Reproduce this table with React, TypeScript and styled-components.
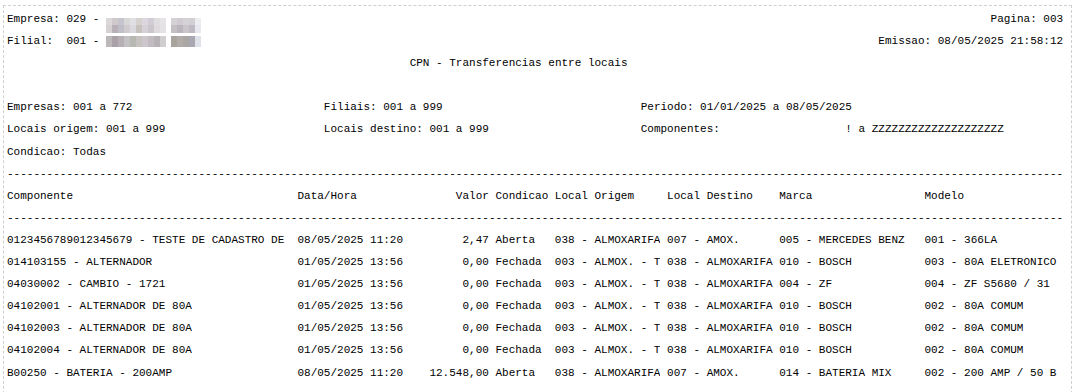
import React from 'react'
import styled, { createGlobalStyle } from 'styled-components'

const GlobalStyle = createGlobalStyle`
  html, body {
    margin: 0;
    padding: 0;
    background: #ffffff;
  }
  body {
    font-family: 'Liberation Mono', 'Courier New', monospace;
    font-size: 11px;
    color: #000000;
  }
`

const Page = styled.div`
  margin: 5px 0 0 3px;
  width: 1061px;
  height: 420px;
  padding: 2px 3px 0 3px;
  border: 1px dashed #cfcfcf;
  line-height: 22.1px;
  white-space: pre;
  overflow: hidden;
`

const Line = styled.div`
  height: 22.1px;
`

const TopLine = styled.div`
  display: flex;
  justify-content: space-between;
  width: 160ch;
  height: 22.1px;
`

const Title = styled.div`
  padding-left: 61ch;
  height: 22.1px;
`

const FilterRow = styled.div`
  display: grid;
  grid-template-columns: 48ch 48ch 64ch;
  height: 22.1px;
`

const Grid = styled.div`
  display: grid;
  grid-template-columns: 43ch 16ch 12ch 8ch 16ch 16ch 21ch 21ch;
  column-gap: 1ch;
  height: 22.1px;
`

const Cell = styled.span<{ $right?: boolean }>`
  overflow: hidden;
  text-align: ${(p) => (p.$right ? 'right' : 'left')};
`

const Mosaic = styled.span<{ $cols: number; $rowH: number }>`
  display: inline-grid;
  grid-template-columns: repeat(${(p) => p.$cols}, 6px);
  grid-auto-rows: ${(p) => p.$rowH}px;
  vertical-align: -3px;
  margin-right: 5px;
`

const Px = styled.span<{ $c: string }>`
  background: ${(p) => p.$c};
`

const empresaA = [
  '#dcd8da', '#cfc9cc', '#c6c4cc', '#d9d6d8', '#e0e0e4', '#d4d1cf', '#dcd6de', '#d2cdd4', '#e0dde0', '#e6e4e6',
  '#d6d2d3', '#b9b1b9', '#c0bec6', '#cfcbce', '#d9d9de', '#c8c2bc', '#d6d0d8', '#cbc6cc', '#dedadd', '#e4e2e4',
]
const empresaB = [
  '#d5d2d6', '#cfcbd0', '#d6d3d8', '#d3d0d4', '#ecedf0',
  '#c4bfc3', '#b9b5bc', '#c9c5ca', '#bdbac4', '#e6e8ee',
]
const filialA = ['#bcb8ba', '#a9a0a8', '#b6b0b4', '#c4c1c2', '#b8b8b2', '#c6c2c0', '#cdc6cc', '#c0bcc0', '#b6b2b6', '#d0cece']
const filialB = ['#a8a39d', '#b2aca8', '#aaa6a4', '#a9a8b2', '#dfe2e8']

const Blur = ({ colors, cols, rowH }: { colors: string[]; cols: number; rowH: number }) => (
  <Mosaic $cols={cols} $rowH={rowH}>
    {colors.map((c, i) => (
      <Px key={i} $c={c} />
    ))}
  </Mosaic>
)

const DASHES = '-'.repeat(160)

type Row = [string, string, string, string, string, string, string, string]

const HEADER: Row = ['Componente', 'Data/Hora', 'Valor', 'Condicao', 'Local Origem', 'Local Destino', 'Marca', 'Modelo']

const ROWS: Row[] = [
  ['0123456789012345679 - TESTE DE CADASTRO DE', '08/05/2025 11:20', '2,47', 'Aberta', '038 - ALMOXARIFA', '007 - AMOX.', '005 - MERCEDES BENZ', '001 - 366LA'],
  ['014103155 - ALTERNADOR', '01/05/2025 13:56', '0,00', 'Fechada', '003 - ALMOX. - T', '038 - ALMOXARIFA', '010 - BOSCH', '003 - 80A ELETRONICO'],
  ['04030002 - CAMBIO - 1721', '01/05/2025 13:56', '0,00', 'Fechada', '003 - ALMOX. - T', '038 - ALMOXARIFA', '004 - ZF', '004 - ZF S5680 / 31'],
  ['04102001 - ALTERNADOR DE 80A', '01/05/2025 13:56', '0,00', 'Fechada', '003 - ALMOX. - T', '038 - ALMOXARIFA', '010 - BOSCH', '002 - 80A COMUM'],
  ['04102003 - ALTERNADOR DE 80A', '01/05/2025 13:56', '0,00', 'Fechada', '003 - ALMOX. - T', '038 - ALMOXARIFA', '010 - BOSCH', '002 - 80A COMUM'],
  ['04102004 - ALTERNADOR DE 80A', '01/05/2025 13:56', '0,00', 'Fechada', '003 - ALMOX. - T', '038 - ALMOXARIFA', '010 - BOSCH', '002 - 80A COMUM'],
  ['B00250 - BATERIA - 200AMP', '08/05/2025 11:20', '12.548,00', 'Aberta', '038 - ALMOXARIFA', '007 - AMOX.', '014 - BATERIA MIX', '002 - 200 AMP / 50 B'],
]

const TableRow = ({ row }: { row: Row }) => (
  <Grid>
    {row.map((v, i) => (
      <Cell key={i} $right={i === 2}>
        {v}
      </Cell>
    ))}
  </Grid>
)

export default function App() {
  return (
    <>
      <GlobalStyle />
      <Page>
        <TopLine>
          <span>
            {'Empresa: 029 - '}
            <Blur colors={empresaA} cols={10} rowH={7.5} />
            <Blur colors={empresaB} cols={5} rowH={7.5} />
          </span>
          <span>Pagina: 003</span>
        </TopLine>
        <TopLine>
          <span>
            {'Filial:  001 - '}
            <Blur colors={filialA} cols={10} rowH={11} />
            <Blur colors={filialB} cols={5} rowH={11} />
          </span>
          <span>Emissao: 08/05/2025 21:58:12</span>
        </TopLine>
        <Title>CPN - Transferencias entre locais</Title>
        <Line />
        <FilterRow>
          <span>Empresas: 001 a 772</span>
          <span>Filiais: 001 a 999</span>
          <span>Periodo: 01/01/2025 a 08/05/2025</span>
        </FilterRow>
        <FilterRow>
          <span>Locais origem: 001 a 999</span>
          <span>Locais destino: 001 a 999</span>
          <span>{'Componentes:                   ! a ZZZZZZZZZZZZZZZZZZZZ'}</span>
        </FilterRow>
        <FilterRow>
          <span>Condicao: Todas</span>
        </FilterRow>
        <Line>{DASHES}</Line>
        <TableRow row={HEADER} />
        <Line>{DASHES}</Line>
        {ROWS.map((r, i) => (
          <TableRow key={i} row={r} />
        ))}
      </Page>
    </>
  )
}
